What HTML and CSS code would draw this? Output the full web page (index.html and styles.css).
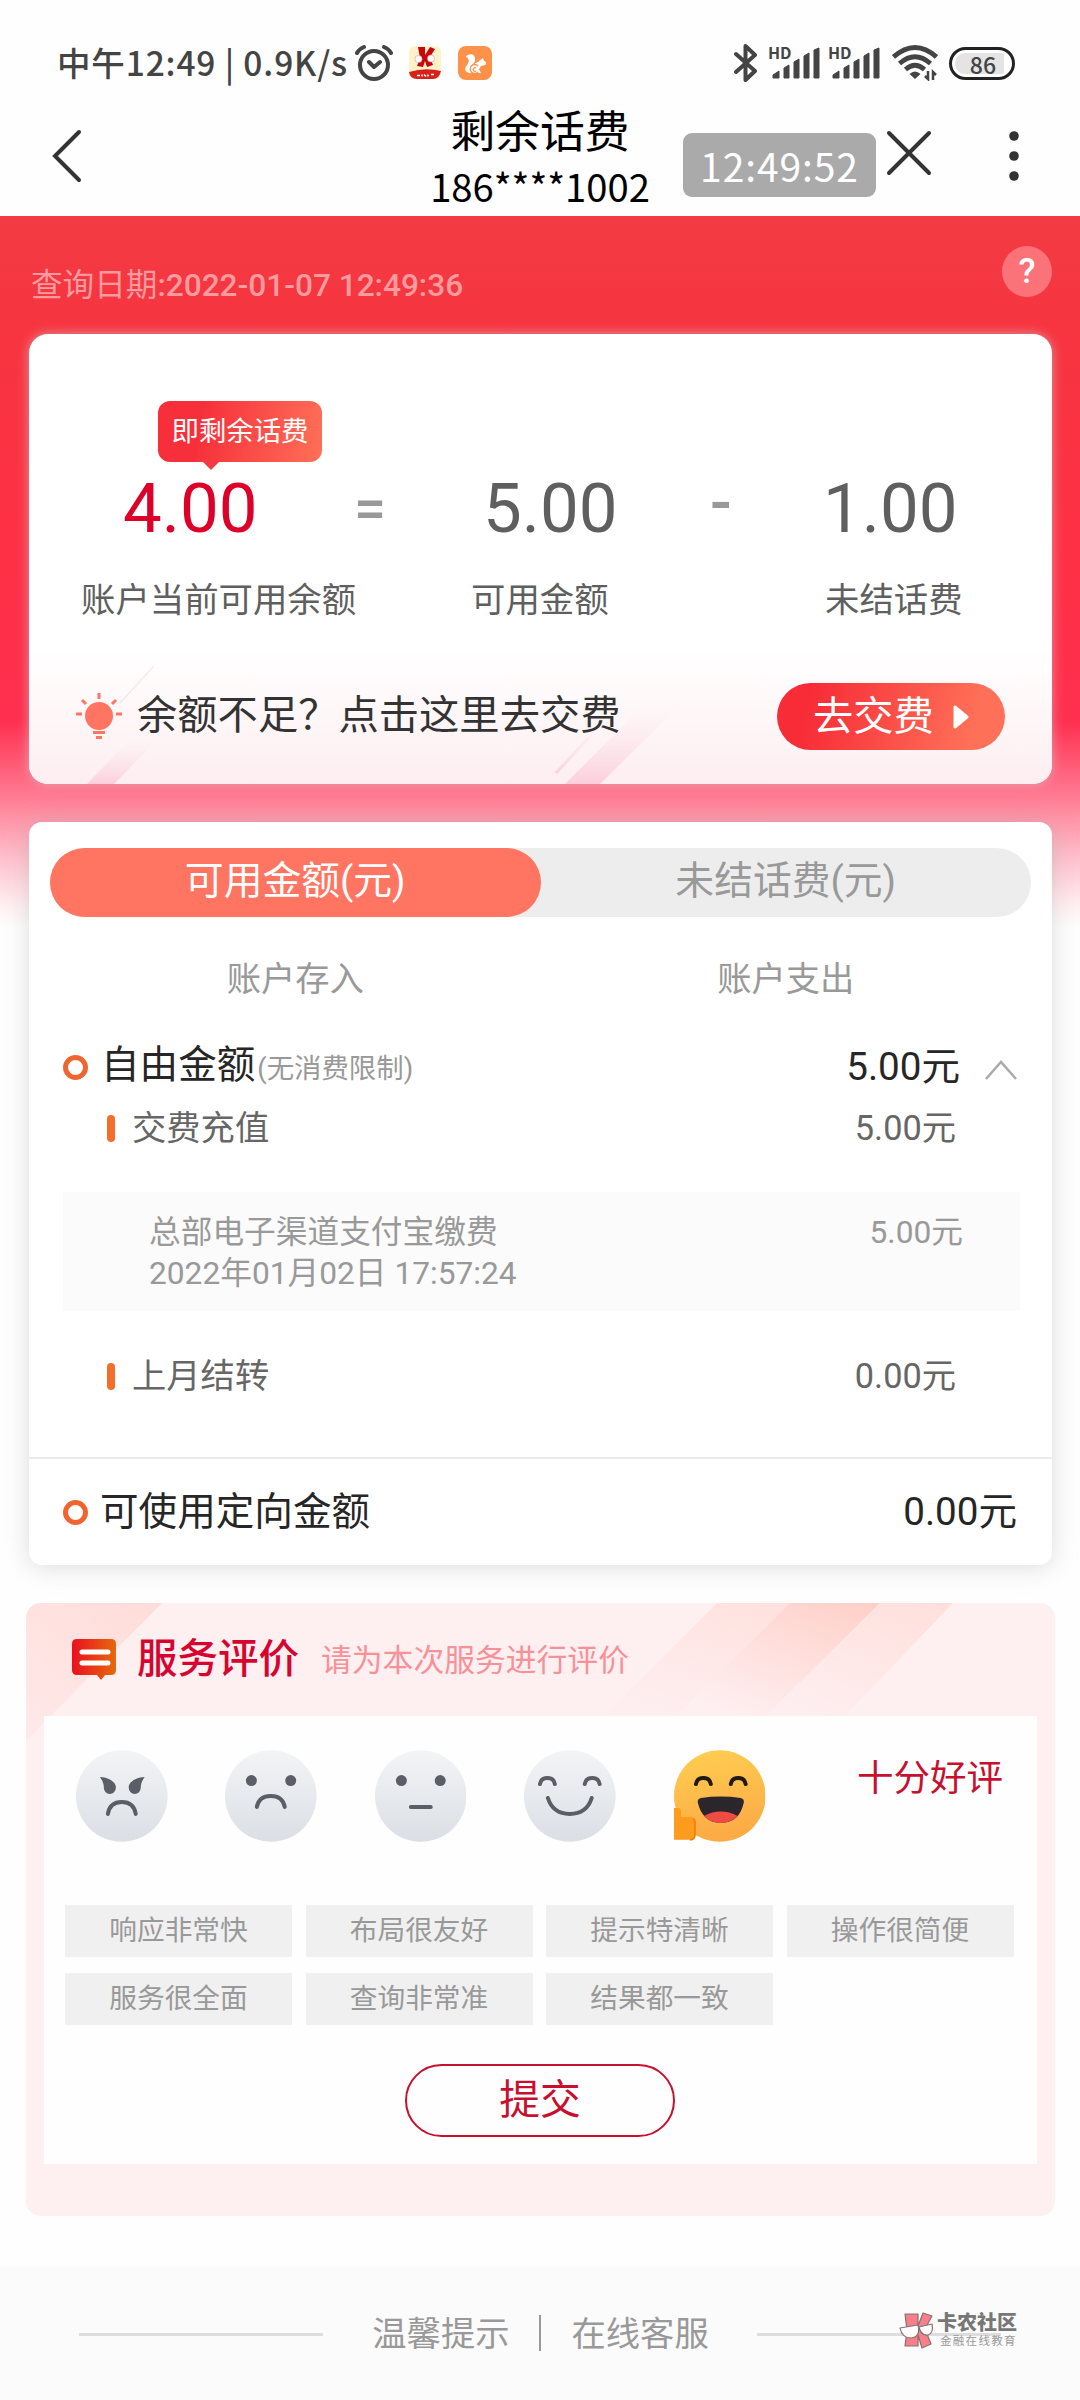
FILE: index.html
```html
<!DOCTYPE html>
<html lang="zh-CN">
<head>
<meta charset="utf-8">
<title>剩余话费</title>
<link rel="stylesheet" href="styles.css">
</head>
<body>
<div class="statusbar">
  <span class="status-text">中午12:49 | 0.9K/s</span>
  <svg class="alarm" width="38" height="36" viewBox="0 0 38 36" fill="none" stroke="#444" stroke-width="4" stroke-linecap="round" stroke-linejoin="round"><circle cx="19" cy="20" r="14"/><path d="M2 8Q4 4 9 2M36 8Q34 4 29 2M14 17l5 5 6-5"/></svg>
  <svg class="app-card" width="32" height="34" viewBox="0 0 32 34"><rect width="32" height="33" rx="6" fill="#fdf3c9"/><path d="M9 1h7v8l5-8 5 2-5 8 3 8-6 2-2-6-2 6-6-1 3-8z" fill="#c8060c"/><circle cx="9.500" cy="13" r="3.600" fill="#fff" stroke="#c99" stroke-width=".6"/><circle cx="22" cy="12.500" r="3.600" fill="#fff" stroke="#c99" stroke-width=".6"/><path d="M0 26q16-5 32-1-2 8-8 8H8Q1 33 0 26z" fill="#d9201b"/><path d="M8 29.500h3m2-1v2m2-2 2 2m2-2v2m3-2h3" stroke="#fff" stroke-width="1.500"/></svg>
  <svg class="app-uc" width="34" height="34" viewBox="0 0 34 34"><rect width="34" height="34" rx="8" fill="#ff9148"/><path d="M8 11c1-4 10-4 9 3 0 3-3 4-3 6 2-3 5-3 7-5l4-3 1 3c2 0 3 3 1 4l-4 1-2 3 2 4h-9c-6 1-9-4-5-8 2-3 3-6-1-8z" fill="#fff"/><path d="M20 20a4.500 4.500 0 1 0 0 6M18 22a1.800 1.800 0 1 0 0 3" fill="none" stroke="#ff9148" stroke-width="1.300"/></svg>
  <div class="status-right">
    <svg width="24" height="38" viewBox="0 0 24 38" fill="none" stroke="#444" stroke-width="4" stroke-linecap="round" stroke-linejoin="round"><path d="M2 10 21 27 11.500 36V2L21 11 2 28"/></svg>
    <svg class="signal" width="49" height="34" viewBox="0 0 49 34"><text x="-3" y="13" class="hd">HD</text><path d="M2 32v-3l6-4v7zM13 32V22l5-3v13zM23 32V16l5-3v19zM33 32V10l5-3v25zM43 32V4l5-2v30z" fill="#444" stroke="#444" stroke-width="1" stroke-linejoin="round"/></svg>
    <svg class="signal second" width="49" height="34" viewBox="0 0 49 34"><text x="-3" y="13" class="hd">HD</text><path d="M2 32v-3l6-4v7zM13 32V22l5-3v13zM23 32V16l5-3v19zM33 32V10l5-3v25zM43 32V4l5-2v30z" fill="#444" stroke="#444" stroke-width="1" stroke-linejoin="round"/></svg>
    <svg class="wifi" width="46" height="36" viewBox="0 0 46 36" fill="none" stroke="#444" stroke-width="4.800"><path d="M1.500 12Q23-7 44.500 12M7.500 18.500Q23 5 38.500 18.500M13.500 24.500Q23 16 32.500 24.500"/><path d="M17.500 29Q23 24 28.500 29L23 34z" fill="#444" stroke="none"/><path d="M36 26v8l-3-3M41 35v-8l3 3" stroke-width="2.500"/></svg>
    <div class="battery"><span>86</span></div>
  </div>
</div>
<header class="navbar">
  <svg class="back" width="30" height="54" viewBox="0 0 30 54" fill="none" stroke="#333" stroke-width="4" stroke-linecap="round"><path d="M27 3 3 27 27 51"/></svg>
  <div class="nav-title"><h1>剩余话费</h1><p>186****1002</p></div>
  <div class="clock">12:49:52</div>
  <svg class="close" width="46" height="46" viewBox="0 0 46 46" fill="none" stroke="#333" stroke-width="4" stroke-linecap="round"><path d="M3 3 43 43M43 3 3 43"/></svg>
  <svg class="more" width="10" height="52" viewBox="0 0 10 52" fill="#333"><circle cx="5" cy="6" r="4.800"/><circle cx="5" cy="26" r="4.800"/><circle cx="5" cy="46" r="4.800"/></svg>
</header>
<main class="page">
  <div class="query"><p>查询日期<b>:2022-01-07 12:49:36</b></p><span class="help">?</span></div>

  <section class="card balance">
    <div class="sums">
      <div class="sum sum-now"><span class="tip">即剩余话费</span><strong>4.00</strong><span>账户当前可用余额</span></div>
      <i class="op op-eq">=</i>
      <div class="sum sum-avail"><strong>5.00</strong><span>可用金额</span></div>
      <i class="op op-minus">-</i>
      <div class="sum sum-due"><strong>1.00</strong><span>未结话费</span></div>
    </div>
    <div class="promo">
      <svg class="streaks" width="1023" height="134" viewBox="0 0 1023 134">
        <defs><linearGradient id="st" x1="0" y1="1" x2="0" y2="0"><stop offset="0" stop-color="#fbcfdc"/><stop offset="1" stop-color="#fdeef2" stop-opacity="0"/></linearGradient></defs>
        <path d="M58 134 103 87h28L85 134z" fill="url(#st)"/><path d="M90 53 124 16l1 1-34 37z" fill="#f8e8ec"/>
        <path d="M536 134l82-82h36l-83 82z" fill="url(#st)"/><path d="M526 122l50-54h4l-52 56z" fill="url(#st)"/>
      </svg>
      <svg class="bulb" width="46" height="46" viewBox="0 0 46 46" fill="none" stroke="#ff7562" stroke-width="3"><circle cx="23" cy="23" r="14" fill="#ff7562" stroke="none"/><path d="M23 0v6M0 21h6M40 21h6M6 7l4 4M40 7l-4 4M17 39.500h12M20 44.500h6"/></svg>
      <span class="promo-text">余额不足？点击这里去交费</span>
      <span class="pay">去交费<svg width="16" height="24" viewBox="0 0 16 24"><path d="M2 2v20L14 12z" fill="#fff" stroke="#fff" stroke-width="3" stroke-linejoin="round"/></svg></span>
    </div>
  </section>

  <section class="card detail">
    <div class="tabs"><span class="tab active">可用金额(元)</span><span class="tab">未结话费(元)</span></div>
    <div class="subtabs"><span>账户存入</span><span>账户支出</span></div>
    <div class="row main-row first"><i class="ring"></i><span class="name">自由金额<small>(无消费限制)</small></span><span class="val">5.00元</span><svg class="up" width="32" height="20" viewBox="0 0 32 20" fill="none" stroke="#aaa" stroke-width="2.500"><path d="M1 19 16 2 31 19"/></svg></div>
    <div class="row sub-row"><i class="bar"></i><span class="name">交费充值</span><span class="val">5.00元</span></div>
    <div class="record"><p>总部电子渠道支付宝缴费<br>2022年01月02日 17:57:24</p><span>5.00元</span></div>
    <div class="row sub-row carry"><i class="bar"></i><span class="name">上月结转</span><span class="val">0.00元</span></div>
    <div class="row main-row directed"><i class="ring"></i><span class="name">可使用定向金额</span><span class="val">0.00元</span></div>
  </section>

  <section class="rating">
    <svg class="rating-bg" width="1029" height="138" viewBox="0 0 1029 138">
      <defs>
        <linearGradient id="r1" x1="1" y1="0" x2="0" y2="1"><stop offset="0" stop-color="#ffdcd8"/><stop offset="1" stop-color="#ffe9e9"/></linearGradient>
        <linearGradient id="r2" x1="1" y1="0" x2=".3" y2="1"><stop offset="0" stop-color="#ffcfc7"/><stop offset="1" stop-color="#feeff1"/></linearGradient>
        <linearGradient id="r3" x1="1" y1="0" x2=".3" y2="1"><stop offset="0" stop-color="#ffdfda"/><stop offset="1" stop-color="#feeef0"/></linearGradient>
      </defs>
      <path d="M0 0h136L0 138z" fill="url(#r1)"/>
      <path d="M691 0h130L708 113H578z" fill="url(#r3)"/>
      <path d="M764 0h90L740 113H650z" fill="url(#r2)"/>
      <path d="M854 0h73L819 113h-79z" fill="url(#r3)"/>
    </svg>
    <div class="rating-head">
      <svg width="46" height="42" viewBox="0 0 46 42"><defs><linearGradient id="ic"><stop offset="0" stop-color="#e90f1f"/><stop offset="1" stop-color="#e56a0c"/></linearGradient></defs><path d="M6 0h34q5 0 5 5v26q0 5-5 5h-6l-4 5-4-5H6q-5 0-5-5V5q0-5 5-5z" fill="url(#ic)"/><path d="M11 13h26M11 24h26" stroke="#fff" stroke-width="5" stroke-linecap="round"/></svg>
      <h2>服务评价</h2><p>请为本次服务进行评价</p>
    </div>
    <div class="rating-body">
      <div class="faces">
        <svg viewBox="0 0 92 92"><defs><linearGradient id="fg" x1="0" y1="0" x2="0" y2="1"><stop offset="0" stop-color="#f3f4f6"/><stop offset="1" stop-color="#dbdfe5"/></linearGradient></defs><circle cx="46" cy="46" r="46" fill="url(#fg)"/><path d="M24 27c8 0 17 5 16 11a6 6 0 0 1-12 0c0-4-1-7-4-11zM69 27c-8 0-17 5-16 11a6 6 0 0 0 12 0c0-4 1-7 4-11z" fill="#5b5e66"/><path d="M32 64q2-12 14-12t14 12" class="line"/></svg>
        <svg viewBox="0 0 92 92"><circle cx="46" cy="46" r="46" fill="url(#fg)"/><circle cx="26.500" cy="30.500" r="5.500" fill="#5b5e66"/><circle cx="66" cy="30.500" r="5.500" fill="#5b5e66"/><path d="M32 57q2-11 14-11t14 11" class="line"/></svg>
        <svg viewBox="0 0 92 92"><circle cx="46" cy="46" r="46" fill="url(#fg)"/><circle cx="26.500" cy="30.500" r="5.500" fill="#5b5e66"/><circle cx="65.500" cy="30.500" r="5.500" fill="#5b5e66"/><path d="M36 57h20" class="line"/></svg>
        <svg viewBox="0 0 92 92"><circle cx="46" cy="46" r="46" fill="url(#fg)"/><path d="M16 34q1-6 7.500-6t7.500 6M61 34q1-6 7.500-6t7.500 6M24 48q5 16 22 16t22-16" class="line"/></svg>
        <svg viewBox="0 0 92 92"><defs><linearGradient id="fy" x1="0" y1="0" x2=".2" y2="1"><stop offset="0" stop-color="#ffcf52"/><stop offset="1" stop-color="#fcab45"/></linearGradient></defs><circle cx="46" cy="46" r="46" fill="url(#fy)"/><path d="M22 34q1-6 7.500-6t7.500 6M57 34q1-6 7.500-6t7.500 6" class="line dark"/><path d="M27 48q20-3 40 0 4 1 3 5c-3 13-10 20-23 20S27 65 24 53q-1-4 3-5z" fill="#2b262b"/><path d="M30 66q17-9 34 0-7 7-17 7t-17-7z" fill="#ee4b42"/><path d="M0 58h4q3 0 3 4v5h10q4 0 4 4v14q0 5-5 5H0z" fill="#ff9c1e"/><path d="M19 69q2 1 2 3v13q0 5-5 5" fill="none" stroke="#f28110" stroke-width="2"/></svg>
        <span>十分好评</span>
      </div>
      <div class="tags"><span>响应非常快</span><span>布局很友好</span><span>提示特清晰</span><span>操作很简便</span><span>服务很全面</span><span>查询非常准</span><span>结果都一致</span></div>
      <div class="submit">提交</div>
    </div>
  </section>
</main>
<footer class="footer">
  <i class="rule"></i><span>温馨提示</span><i class="sep"></i><span>在线客服</span><i class="rule"></i>
  <div class="mark">
    <svg width="36" height="38" viewBox="0 0 36 38" stroke="#8a7072" stroke-width="1.200" stroke-linejoin="round"><path d="M6 2h13v12l5-13 9 3-7 13 6 15-9 4-4-13v11H6l2-16z" fill="#f5808a"/><path d="M1 16 19 13Q22 25 12 26 3 26 1 16zM20 15l13-3q2 9-4 11-7 1-9-8z" fill="#fff"/></svg>
    <p><b>卡农社区</b><small>金融在线教育</small></p>
  </div>
</footer>
</body>
</html>
```

FILE: styles.css
```css
* { box-sizing: border-box; margin: 0; padding: 0; }
body { width: 1080px; height: 2400px; overflow: hidden; background: #fefefe; font-family: Roboto, "Noto Sans CJK SC", sans-serif; font-weight: 400; color: #222; display: flex; flex-direction: column; }
i { font-style: normal; }
svg { display: block; flex: none; }
span, p, h1, h2 { white-space: nowrap; }

.statusbar { height: 108px; padding: 18px 65px 0 57px; display: flex; align-items: center; font-family: "Noto Sans CJK SC", sans-serif; color: #444; }
.status-text { font-size: 33.500px; font-weight: 500; letter-spacing: .85px; width: 298px; line-height: 48px; margin-top: -2px; }
.app-card { margin-left: 16px; }
.app-uc { margin-left: 17px; }
.status-right { margin-left: auto; display: flex; align-items: center; }
.signal { margin-left: 13px; overflow: visible; }
.signal.second { margin-left: 11px; }
.hd { font: 700 16px "Noto Sans CJK SC", sans-serif; fill: #444; }
.wifi { margin-left: 12px; }
.battery { margin-left: 11px; width: 66px; height: 33px; border: 3px solid #222; border-radius: 17px; padding: 3px 9px 3px 3px; display: flex; background: #fff; }
.battery span { flex: 1; background: #e4e4e4; border-radius: 10px 2px 2px 10px; font-size: 23px; font-weight: 500; line-height: 22px; text-align: right; padding-right: 8px; margin-right: -1px; }

.navbar { height: 108px; position: relative; display: flex; align-items: flex-start; font-family: "Noto Sans CJK SC", sans-serif; color: #000; }
.back { margin: 21px 0 0 52px; }
.nav-title { width: 240px; margin-left: 338px; text-align: center; }
.nav-title h1 { font-size: 44.800px; font-weight: 400; line-height: 48px; margin-top: -3px; }
.nav-title p { font-size: 38.200px; line-height: 50px; margin-top: 8px; font-weight: 400; }
.clock { margin: 25px 0 0 23px; width: 193px; height: 64px; border-radius: 9px; background: #aaa; color: #fff; font-size: 39px; font-weight: 400; letter-spacing: .9px; line-height: 64px; text-align: center; }
.close { margin: 22px 0 0 10px; }
.more { margin: 22px 0 0 77px; }

.page { height: 2050px; padding: 0 28px 0 29px; background: linear-gradient(#f23b42 0, #f73440 120px, #fe3045 340px, #ff2f4f 505px, #ff5773 545px, #ff7a92 580px, #ffc0cc 642px, #ffeef1 688px, #fefefe 712px); }
.query { height: 118px; display: flex; justify-content: space-between; color: #ff9b9f; font-size: 31.600px; }
.query p { margin: 51px 0 0 2px; line-height: 38px; }
.query b { font-weight: 500; }
.help { margin-top: 30px; width: 50px; height: 51px; border-radius: 50%; background: #fb7379; color: #fff; font-size: 35px; font-weight: 500; line-height: 51px; text-align: center; }

.card { background: #fff; }
.balance { height: 450px; border-radius: 19px; overflow: hidden; box-shadow: 0 0 12px rgba(215, 200, 200, .65); }
.sums { height: 316px; padding: 140px 0 0 53px; display: flex; }
.sum { position: relative; display: flex; flex-direction: column; color: #5f5f5f; font-size: 34.400px; }
.sum strong { font-size: 69px; font-weight: 400; line-height: 70px; }
.sum > span:last-child { line-height: 40px; margin-top: 36px; margin-left: -1px; }
.sum-now { width: 274px; }
.sum-now strong { padding-left: 41px; color: #dd0029; }
.sum-avail { width: 137px; margin-left: 86px; }
.sum-avail strong { padding-left: 11px; }
.sum-due { margin-left: 84px; }
.sum-due strong { margin-left: -3px; }
.tip { position: absolute; left: 76px; top: -73px; width: 164px; height: 61px; border-radius: 12px; background: linear-gradient(100deg, #f62f3a 25%, #ff7058); color: #fff; font-size: 27.400px; line-height: 63px; text-align: center; }
.tip::after { content: ""; position: absolute; left: 44px; top: 60px; border: 9px solid transparent; border-top-color: #f63a3f; border-bottom: 0; }
.op { width: 32px; font-size: 57px; font-weight: 500; line-height: 70px; color: #999; }
.op-eq { margin-left: -2px; }
.op-minus { margin-left: 101px; font-size: 64px; line-height: 60px; }
.promo { position: relative; height: 134px; padding-left: 47px; display: flex; background: linear-gradient(#fff, #fdeef1); }
.streaks { position: absolute; left: 0; top: 0; }
.bulb { position: relative; margin-top: 43px; }
.promo-text { position: relative; margin: 42px 0 0 15px; font-size: 40.300px; line-height: 48px; color: #333; }
.pay { position: absolute; left: 748px; top: 33px; width: 228px; height: 67px; border-radius: 34px; background: linear-gradient(105deg, #f72c37 15%, #ff7058 85%); color: #fff; font-size: 40.300px; line-height: 63px; padding-left: 36px; display: flex; align-items: center; gap: 19px; }

.detail { margin-top: 38px; height: 743px; border-radius: 13px; padding-top: 26px; box-shadow: 0 2px 24px rgba(170, 170, 170, .4); }
.tabs { margin: 0 21px; height: 69px; border-radius: 35px; background: #ededed; display: flex; }
.tab { flex: 1; border-radius: 35px; text-align: center; font-size: 38.800px; line-height: 66px; color: #999; }
.tab.active { background: #ff7562; color: #fff; }
.subtabs { margin: 42px 21px 0; display: flex; }
.subtabs span { flex: 1; text-align: center; font-size: 34.300px; line-height: 40px; color: #999; }
.row { display: flex; align-items: center; }
.main-row { font-size: 38.600px; line-height: 48px; padding: 0 35px; color: #262626; }
.main-row .name { margin-left: 13px; }
.main-row.directed .name { margin-left: 12px; }
.ring { width: 25px; height: 25px; border: 5px solid #f0652f; border-radius: 50%; margin-left: -1px; }
.row .val { margin-left: auto; }
.main-row.first { margin-top: 42px; }
.main-row small { font-size: 27.400px; color: #999; margin-left: 2px; }
.up { margin: 5px 0 0 25px; }
.sub-row { font-size: 34.300px; line-height: 40px; padding: 0 96px 0 78px; margin-top: 15px; color: #666; }
.sub-row .name { margin-left: 17px; }
.bar { width: 8px; height: 27px; border-radius: 4px; background: #f56f2c; }
.record { margin: 44px 32px 0 34px; height: 119px; background: #fbfbfb; padding: 20px 57px 0 86px; display: flex; justify-content: space-between; font-size: 31.700px; line-height: 41px; color: #999; }
.sub-row.carry { margin-top: 45px; }
.main-row.directed { margin-top: 61px; border-top: 2px solid #ebebeb; padding-top: 29px; }

.rating { position: relative; margin: 38px -3px 0; height: 613px; width: 1029px; border-radius: 15px; background: #feeff1; overflow: hidden; }
.rating-bg { position: absolute; left: 0; top: 0; }
.rating-head { position: relative; height: 113px; display: flex; padding-left: 45px; }
.rating-head svg { margin-top: 36px; }
.rating-head h2 { margin: 32px 0 0 20px; font-size: 40.500px; line-height: 48px; font-weight: 500; color: #d6042f; }
.rating-head p { margin: 38px 0 0 22px; font-size: 30.800px; line-height: 40px; color: #f79198; }
.rating-body { position: relative; margin: 0 18px; height: 448px; background: #fefefe; padding-left: 21px; }
.faces { height: 189px; display: flex; gap: 57.800px; padding: 34px 0 0 11px; }
.faces svg { width: 91.600px; height: 92px; }
.faces span { margin-left: 34px; font-size: 36.500px; line-height: 57px; color: #c8102e; }
.line { fill: none; stroke: #5b5e66; stroke-width: 4; stroke-linecap: round; }
.line.dark { stroke: #1f1a12; }
.tags { display: grid; grid-template-columns: repeat(4, 227px); gap: 16px 13.500px; }
.tags span { height: 52px; background: #f0f0f0; color: #999; text-align: center; font-size: 27.700px; line-height: 52px; }
.submit { margin: 39px 0 0 340px; width: 270px; height: 73px; border: 2px solid #c8102e; border-radius: 37px; color: #c8102e; font-size: 40.800px; line-height: 68px; text-align: center; }

.footer { position: relative; height: 134px; background: #fbfbfb; display: flex; align-items: center; padding: 0 79px; color: #999; font-size: 34.300px; }
.footer span { line-height: 40px; margin-top: 1px; }
.rule { width: 245px; height: 3px; background: #ddd; margin-top: 2px; }
.sep { width: 3px; height: 36px; background: #999; margin: 0 30px 0 29px; }
.rule + span { margin-left: 49px; }
span + .rule { margin-left: 48px; }
.mark { position: absolute; left: 899px; top: 46px; display: flex; color: #777; }
.mark p { display: flex; flex-direction: column; margin-left: 2px; }
.mark b { font-size: 20px; line-height: 22px; font-weight: 900; }
.mark small { font-size: 11.500px; line-height: 15px; letter-spacing: 1.300px; margin-left: 3px; color: #999; }
```
